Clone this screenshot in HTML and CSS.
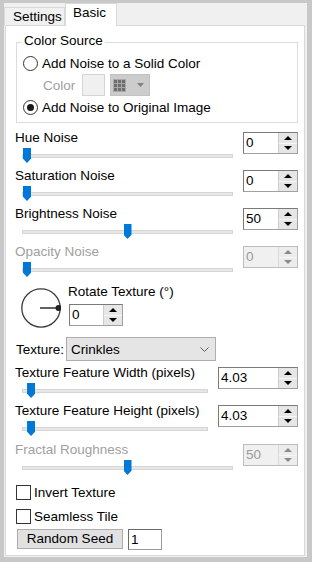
FILE: index.html
```html
<!DOCTYPE html>
<html>
<head>
<meta charset="utf-8">
<link rel="stylesheet" href="styles.css">
</head>
<body>
<div class="window">
  <div class="tabs">
    <div class="tab">Settings</div>
    <div class="tab active">Basic</div>
  </div>
  <div class="panel">
    <div class="group">
      <div class="legend">Color Source</div>
      <div class="radio-row"><span class="radio"></span><span>Add Noise to a Solid Color</span></div>
      <div class="color-row">
        <span class="clabel">Color</span>
        <span class="swatch"></span>
        <span class="palette">
          <svg width="13" height="13" viewBox="0 0 13 13"><rect width="13" height="13" fill="#a8a8a8"/><rect x="1" y="1" width="3" height="3" fill="#6e6e6e"/><rect x="5" y="1" width="3" height="3" fill="#6e6e6e"/><rect x="9" y="1" width="3" height="3" fill="#6e6e6e"/><rect x="1" y="5" width="3" height="3" fill="#6e6e6e"/><rect x="5" y="5" width="3" height="3" fill="#6e6e6e"/><rect x="9" y="5" width="3" height="3" fill="#6e6e6e"/><rect x="1" y="9" width="3" height="3" fill="#6e6e6e"/><rect x="5" y="9" width="3" height="3" fill="#6e6e6e"/><rect x="9" y="9" width="3" height="3" fill="#6e6e6e"/></svg>
          <svg class="parrow" width="7" height="4" viewBox="0 0 7 4"><path d="M0 0H7L3.5 4Z" fill="#808080"/></svg>
        </span>
      </div>
      <div class="radio-row r2"><span class="radio on"></span><span>Add Noise to Original Image</span></div>
    </div>

    <div class="sliders">
      <div class="srow">
        <div class="scol">
          <div class="lbl">Hue Noise</div>
          <div class="slider"><div class="track"></div><div class="thumb" style="--v:0"></div></div>
        </div>
        <div class="spin"><div class="val">0</div><div class="btns"><span class="up"></span><span class="dn"></span></div></div>
      </div>
      <div class="srow">
        <div class="scol">
          <div class="lbl">Saturation Noise</div>
          <div class="slider"><div class="track"></div><div class="thumb" style="--v:0"></div></div>
        </div>
        <div class="spin"><div class="val">0</div><div class="btns"><span class="up"></span><span class="dn"></span></div></div>
      </div>
      <div class="srow">
        <div class="scol">
          <div class="lbl">Brightness Noise</div>
          <div class="slider"><div class="track"></div><div class="thumb" style="--v:0.5"></div></div>
        </div>
        <div class="spin"><div class="val">50</div><div class="btns"><span class="up"></span><span class="dn"></span></div></div>
      </div>
      <div class="srow disabled">
        <div class="scol">
          <div class="lbl">Opacity Noise</div>
          <div class="slider"><div class="track"></div><div class="thumb" style="--v:0"></div></div>
        </div>
        <div class="spin"><div class="val">0</div><div class="btns"><span class="up"></span><span class="dn"></span></div></div>
      </div>
    </div>

    <div class="rot">
      <svg class="dial" width="40" height="40" viewBox="0 0 40 40"><circle cx="20" cy="20" r="19.2" fill="none" stroke="#3a3a3a" stroke-width="1.3"/><line x1="19" y1="20" x2="37" y2="20" stroke="#3a3a3a" stroke-width="1.6"/><circle cx="37.5" cy="20" r="3" fill="#222"/></svg>
      <div class="rotcol">
        <div class="lbl">Rotate Texture (°)</div>
        <div class="spin rspin"><div class="val">0</div><div class="btns"><span class="up"></span><span class="dn"></span></div></div>
      </div>
    </div>

    <div class="tex-row">
      <span class="tlabel">Texture:</span>
      <div class="select"><span>Crinkles</span><svg width="9" height="5" viewBox="0 0 9 5"><path d="M0.5 0.5L4.5 4.5L8.5 0.5" fill="none" stroke="#606060" stroke-width="1"/></svg></div>
    </div>

    <div class="srow first-tf">
      <div class="scol">
        <div class="lbl">Texture Feature Width (pixels)</div>
        <div class="slider"><div class="track"></div><div class="thumb" style="--v:0.023"></div></div>
      </div>
      <div class="spin wide"><div class="val">4.03</div><div class="btns"><span class="up"></span><span class="dn"></span></div></div>
    </div>
    <div class="srow tall">
      <div class="scol">
        <div class="lbl">Texture Feature Height (pixels)</div>
        <div class="slider"><div class="track"></div><div class="thumb" style="--v:0.023"></div></div>
      </div>
      <div class="spin wide"><div class="val">4.03</div><div class="btns"><span class="up"></span><span class="dn"></span></div></div>
    </div>
    <div class="srow disabled">
      <div class="scol">
        <div class="lbl">Fractal Roughness</div>
        <div class="slider"><div class="track"></div><div class="thumb" style="--v:0.5"></div></div>
      </div>
      <div class="spin"><div class="val">50</div><div class="btns"><span class="up"></span><span class="dn"></span></div></div>
    </div>

    <div class="check-row"><span class="box"></span><span>Invert Texture</span></div>
    <div class="check-row"><span class="box"></span><span>Seamless Tile</span></div>

    <div class="seed-row">
      <div class="button">Random Seed</div>
      <div class="input">1</div>
    </div>
  </div>
</div>
</body>
</html>
```

FILE: styles.css
```css
* { box-sizing: border-box; }
body {
  margin: 0;
  font-family: "Liberation Sans", Arial, sans-serif;
  font-size: 13.5px;
  color: #000;
}
.window {
  width: 312px;
  height: 562px;
  border-style: solid;
  border-color: #c8c8c8;
  border-width: 3px 5px 5px 4px;
  background: #f0f0f0;
  display: flex;
  flex-direction: column;
}
.tabs {
  display: flex;
  height: 22px;
  align-items: flex-end;
  flex: none;
}
.tab {
  height: 18px;
  width: 61px;
  line-height: 17px;
  padding-left: 8px;
  background: #f0f0f0;
  border: 1px solid #d9d9d9;
  border-bottom: none;
  white-space: nowrap;
}
.tab.active {
  height: 23px;
  width: 52px;
  padding-left: 7px;
  padding-top: 1px;
  line-height: 16px;
  background: #fff;
  margin-bottom: -1px;
  position: relative;
  z-index: 1;
}
.panel {
  flex: none;
  height: 531px;
  margin: 0 2px 0 1px;
  border: 1px solid #d9d9d9;
  background: #fff;
  padding: 0 6px 0 9px;
}

/* group */
.group {
  margin: 16px 0 0 1px;
  border: 1px solid #dcdcdc;
  padding: 0 0 6px 6px;
}
.legend {
  width: fit-content;
  height: 16px;
  line-height: 16px;
  margin: -10px 0 0 -1px;
  padding: 0 2px;
  background: #fff;
}
.radio-row {
  display: flex;
  align-items: center;
  gap: 4px;
  height: 18px;
  margin-top: 5px;
  white-space: nowrap;
}
.radio-row.r2 { margin-top: 2px; }
.radio {
  width: 15px;
  height: 15px;
  border: 1px solid #333;
  border-radius: 50%;
  display: flex;
  align-items: center;
  justify-content: center;
  background: #fff;
  flex: none;
}
.radio.on::after {
  content: "";
  width: 7px;
  height: 7px;
  border-radius: 50%;
  background: #1a1a1a;
}
.color-row {
  display: flex;
  align-items: center;
  height: 22px;
  margin-top: 2px;
}
.clabel {
  margin-left: 20px;
  width: 39px;
  color: #a0a0a0;
}
.swatch {
  width: 23px;
  height: 22px;
  background: #f0f0f0;
  border: 1px solid #d4d4d4;
}
.palette {
  margin-left: 5px;
  width: 40px;
  height: 22px;
  background: #cccccc;
  border: 1px solid #c2c2c2;
  display: flex;
  align-items: center;
  padding-left: 2px;
}
.palette .parrow { margin-left: 11px; }

/* slider rows */
.sliders { margin-top: 7px; }
.srow {
  display: flex;
  height: 38px;
  align-items: flex-start;
}
.srow.tall { height: 39px; }
.first-tf { margin-top: 4px; }
.scol { flex: 1; min-width: 0; }
.lbl {
  height: 16px;
  line-height: 16px;
  white-space: nowrap;
}
.slider {
  position: relative;
  height: 20px;
  margin: 0 10px 0 7px;
  padding-top: 8px;
}
.track {
  height: 4px;
  background: #e7e7e7;
  border: 1px solid #d6d6d6;
}
.thumb {
  position: absolute;
  top: 2px;
  left: calc(1px + var(--v) * (100% - 10px));
  width: 8px;
  height: 15px;
  background: #0078d7;
  clip-path: polygon(0 0, 100% 0, 100% 72%, 50% 100%, 0 72%);
}
.disabled .lbl { color: #a0a0a0; }

/* spin boxes */
.spin {
  flex: none;
  width: 55px;
  height: 22px;
  margin-top: 2px;
  display: flex;
  border: 1px solid;
  border-color: #7a7a7a #a0a0a0 #a0a0a0 #7a7a7a;
  background: #fff;
}
.spin.wide { width: 80px; }
.val {
  flex: 1;
  line-height: 20px;
  padding-left: 2px;
}
.btns {
  width: 19px;
  background: #e6e6e6;
  border-left: 1px solid #cdcdcd;
  display: flex;
  flex-direction: column;
}
.btns span {
  flex: 1;
  display: flex;
  align-items: center;
  justify-content: center;
}
.btns .dn { border-top: 1px solid #f7f7f7; }
.btns .up::before {
  content: "";
  border-left: 4px solid transparent;
  border-right: 4px solid transparent;
  border-bottom: 4px solid #000;
}
.btns .dn::before {
  content: "";
  border-left: 4px solid transparent;
  border-right: 4px solid transparent;
  border-top: 4px solid #000;
}
.disabled .spin {
  border-color: #bcbcbc;
  background: #f0f0f0;
}
.disabled .val { color: #9a9a9a; }
.disabled .btns { background: #ececec; border-left-color: #dadada; }
.disabled .btns .up::before { border-bottom-color: #8a8a8a; }
.disabled .btns .dn::before { border-top-color: #8a8a8a; }

/* rotate */
.rot {
  display: flex;
  height: 46px;
  align-items: flex-start;
}
.dial { margin: 6px 0 0 6px; flex: none; }
.rotcol { margin: 2px 0 0 7px; }
.spin.rspin { width: 54px; margin: 4px 0 0 1px; }

/* texture select */
.tex-row {
  display: flex;
  align-items: center;
  height: 24px;
  margin-top: 9px;
}
.tlabel { width: 51px; padding-left: 1px; }
.select {
  width: 150px;
  height: 24px;
  background: #e5e5e5;
  border: 1px solid #adadad;
  padding: 0 6px 0 4px;
  display: flex;
  align-items: center;
  justify-content: space-between;
}

/* checks */
.check-row {
  display: flex;
  align-items: center;
  gap: 3px;
  height: 24px;
  margin-left: 1px;
}
.box {
  width: 15px;
  height: 15px;
  border: 1px solid #333;
  background: #fff;
}
.seed-row {
  display: flex;
  margin: 1px 0 0 2px;
}
.button {
  width: 106px;
  height: 20px;
  background: #e1e1e1;
  border: 1px solid #adadad;
  text-align: center;
  line-height: 18px;
}
.input {
  width: 34px;
  height: 21px;
  margin-left: 5px;
  border: 1px solid;
  border-color: #6a6a6a #9a9a9a #9a9a9a #6a6a6a;
  padding-left: 2px;
  line-height: 19px;
}
```
